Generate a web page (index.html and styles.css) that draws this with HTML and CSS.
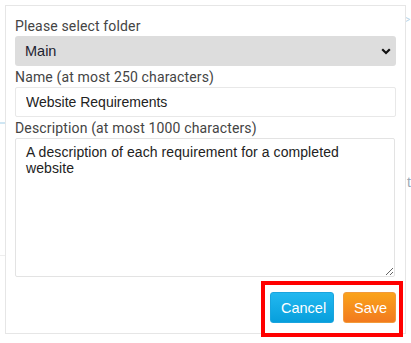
FILE: index.html
```html
<!DOCTYPE html>
<html>
<head>
<meta charset="utf-8">
<link rel="stylesheet" href="styles.css">
</head>
<body>
<div class="backdrop">
  <span class="bg-line bg-blue"></span>
  <span class="bg-line bg-gray"></span>
  <span class="bg-arrow">&gt;</span>
  <span class="bg-t">t</span>
</div>
<div class="panel">
  <label class="lbl">Please select folder</label>
  <div class="select-wrap">
    <select class="select"><option>Main</option></select>
    <svg class="chev" width="10" height="7" viewBox="0 0 10 7"><path d="M1.2 1.2 L5 5 L8.8 1.2" fill="none" stroke="#111" stroke-width="2.2"/></svg>
  </div>
  <label class="lbl">Name (at most 250 characters)</label>
  <input class="field" type="text" value="Website Requirements">
  <label class="lbl">Description (at most 1000 characters)</label>
  <textarea class="area">A description of each requirement for a completed website</textarea>
  <div class="actions">
    <button class="btn btn-cancel">Cancel</button>
    <button class="btn btn-save">Save</button>
  </div>
</div>
<div class="highlight"></div>
</body>
</html>
```
FILE: styles.css
```css
* { box-sizing: border-box; }
html, body { margin: 0; padding: 0; background: #fff; }
body { width: 411px; height: 343px; overflow: hidden; position: relative; font-family: Roboto, "Liberation Sans", sans-serif; }

.backdrop { position: absolute; inset: 0; }
.bg-line { position: absolute; display: block; height: 1px; }
.bg-blue { left: 0; top: 122px; width: 5px; background: #cfe6f3; height: 2px; }
.bg-gray { left: 0; top: 255px; width: 5px; background: #eee; }
.bg-arrow { position: absolute; left: 405px; top: 14px; font-size: 10px; color: #b9d4e6; }
.bg-t { position: absolute; left: 407px; top: 174px; font-size: 14px; color: #9aa7b5; font-family: "Liberation Sans", sans-serif; }

.panel {
  position: relative;
  margin: 5px 0 0 5px;
  width: 401px;
  height: 329px;
  border: 1px solid #e6e6e6;
  background: #fff;
  padding: 9px 9px 0 9px;
  display: flex;
  flex-direction: column;
}
.lbl {
  display: block;
  margin-top: 1px;
  height: 20px;
  line-height: 20px;
  font-size: 14px;
  letter-spacing: 0.15px;
  color: #444;
}
.select-wrap { position: relative; height: 30px; }
.select {
  appearance: none;
  -webkit-appearance: none;
  width: 381px;
  height: 30px;
  border: none;
  border-radius: 3px;
  background: #dddddd;
  font-family: "Liberation Sans", sans-serif;
  font-size: 14.5px;
  color: #1d2330;
  padding: 0 10px;
  margin: 0;
}
.chev { position: absolute; left: 366px; top: 12px; }
.field {
  width: 381px;
  height: 30px;
  border: 1px solid #e8e8e8;
  border-radius: 2px;
  padding: 0 10px;
  font-family: "Liberation Sans", sans-serif;
  font-size: 14px;
  color: #222;
  margin: 0;
  outline: none;
}
.area {
  width: 380px;
  height: 139px;
  border: 1px solid #e3e3e3;
  border-radius: 2px;
  padding: 5px 10px;
  font-family: "Liberation Sans", sans-serif;
  font-size: 14px;
  letter-spacing: 0.08px;
  line-height: 16px;
  color: #222;
  margin: 0;
  resize: both;
  outline: none;
}
.actions {
  display: flex;
  justify-content: flex-end;
  gap: 9px;
  margin-top: 15px;
  width: 381px;
}
.btn {
  height: 31px;
  padding: 0 10px;
  border-radius: 3px;
  font-family: "Liberation Sans", sans-serif;
  font-size: 14.5px;
  color: #fff;
  cursor: pointer;
}
.btn-cancel {
  width: 64px;
  background: linear-gradient(#22b8f0, #079fdc);
  border: 1px solid #1aa4de;
}
.btn-save {
  width: 53px;
  background: linear-gradient(#faa31b, #f27a1f);
  border: 1px solid #f29a3a;
}
.highlight {
  position: absolute;
  left: 261px;
  top: 281px;
  width: 142px;
  height: 56px;
  border: 4px solid #ff0000;
}
```
